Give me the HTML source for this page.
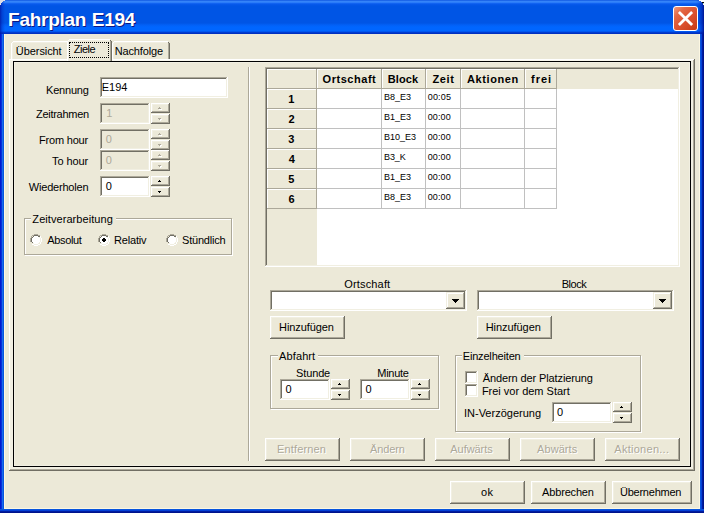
<!DOCTYPE html>
<html><head><meta charset="utf-8"><title>Fahrplan E194</title>
<style>
html,body{margin:0;padding:0;}
body{width:704px;height:513px;position:relative;overflow:hidden;background:#ECE9D8;font-family:"Liberation Sans",sans-serif;}
div,span{position:absolute;box-sizing:border-box;}
.t{font:11px/13px "Liberation Sans",sans-serif;color:#000;white-space:pre;}
.t.b{font-weight:bold;}
.t.s9{font-size:9px;line-height:11px;}
.t.s19{font-size:19px;line-height:22px;}
.t.ttl{color:#fff;text-shadow:1px 1px 0 #0A1883;}
.t.dis{color:#ACA899;text-shadow:1px 1px 0 #fff;}
.t.disf{color:#ACA899;}
.t.gt{background:#ECE9D8;box-shadow:-1px 0 0 #ECE9D8,3px 0 0 #ECE9D8;}
/* frame */
#tb{left:0;top:0;width:704px;height:34px;background:linear-gradient(180deg,#0A50DC 0px,#2E7CF6 1px,#3C8CFB 2px,#1A6CF6 3px,#085AEC 4px,#0055E5 6px,#0055E5 23px,#0260F6 25px,#0066FF 27px,#0066FF 31px,#0048E0 32px,#0030C0 33px,#0030C0 34px);}
#bl{left:0;top:34px;width:4px;height:479px;background:linear-gradient(90deg,#0019CF 0,#0019CF 1px,#0831D9 1px,#0831D9 2px,#166AEE 2px,#166AEE 3px,#0855DD 3px);}
#br{left:700px;top:34px;width:4px;height:479px;background:linear-gradient(90deg,#0855DD 0,#0855DD 1px,#0441D8 1px,#0441D8 2px,#001DA0 2px,#001DA0 3px,#00138C 3px);}
#bb{left:0;top:509px;width:704px;height:4px;background:linear-gradient(180deg,#0855DD 0,#0855DD 1px,#0441D8 1px,#0441D8 2px,#001DA0 2px,#001DA0 3px,#00138C 3px);}
#cream{left:4px;top:34px;width:696px;height:475px;border:1px solid #FCF7E2;border-top:none;}
.cnr{width:4px;height:4px;top:0;background:#fff;}
/* close */
#cl{left:673px;top:6px;width:25px;height:25px;border:1px solid #fff;border-radius:3px;background:linear-gradient(135deg,#EE9A7C 0%,#E36844 25%,#DC5230 55%,#C63A14 100%);}
/* 3d */
.btn{background:#ECE9D8;box-shadow:inset -1px -1px 0 #716F64,inset 1px 1px 0 #fff,inset -2px -2px 0 #ACA899,inset 2px 2px 0 #F1EFE2;}
.sbtn{background:#ECE9D8;box-shadow:inset -1px -1px 0 #716F64,inset 1px 1px 0 #F1EFE2,inset -2px -2px 0 #ACA899,inset 2px 2px 0 #fff;}
.sunk{background:#fff;box-shadow:inset -1px -1px 0 #fff,inset 1px 1px 0 #ACA899,inset -2px -2px 0 #F1EFE2,inset 2px 2px 0 #716F64;}
.sunk.d{background:#ECE9D8;}
.grp{border:1px solid #ACA899;box-shadow:1px 1px 0 #fff,inset 1px 1px 0 #fff;}
.k{background:#000;}
.w{background:#fff;}
.l{background:#F1EFE2;}
.g{background:#ACA899;}
.dk{background:#716F64;}
.f{background:#ECE9D8;}
.gl{background:#C0C0C0;}

</style></head>
<body>
<div id="tb"></div><div id="bl"></div><div id="br"></div><div id="bb"></div><div id="cream"></div>
<div style="left:0;top:0;width:6px;height:34px;background:linear-gradient(90deg,rgba(0,20,160,.75) 0,rgba(0,30,180,.35) 2px,rgba(0,40,200,0) 5px)"></div>
<div style="left:696px;top:0;width:8px;height:34px;background:linear-gradient(270deg,rgba(0,10,130,.85) 0,rgba(0,20,160,.55) 2px,rgba(0,40,200,.2) 5px,rgba(0,40,200,0) 8px)"></div>
<svg style="position:absolute;left:0;top:0" width="704" height="8" viewBox="0 0 704 8" shape-rendering="crispEdges"><path d="M0 0h5v1h-2v1h-1v1h-1v2h-1z" fill="#DCDEE6"/><path d="M699 0h5v2h-3v-1h-2z" fill="#fff"/><rect x="702" y="2" width="2" height="1" fill="#000"/><rect x="703" y="3" width="1" height="1" fill="#C4E4C4"/><rect x="703" y="4" width="1" height="1" fill="#F4F8F4"/></svg>
<div id="cl"></div>
<svg style="position:absolute;left:673px;top:6px" width="25" height="25" viewBox="0 0 25 25"><path d="M5.9 5.9 L19.1 19.1 M19.1 5.9 L5.9 19.1" stroke="#fff" stroke-width="2.8" stroke-linecap="butt" fill="none"/></svg>
<div class="l" style="left:10px;top:60px;width:683px;height:409px;"></div>
<div class="w" style="left:9px;top:59px;width:686px;height:1px;"></div>
<div class="" style="left:10px;top:60px;width:684px;height:1px;background:#F8F7EE;"></div>
<div class="w" style="left:9px;top:59px;width:1px;height:412px;"></div>
<div class="l" style="left:10px;top:60px;width:1px;height:410px;"></div>
<div class="dk" style="left:694px;top:59px;width:1px;height:412px;"></div>
<div class="g" style="left:693px;top:60px;width:1px;height:410px;"></div>
<div class="dk" style="left:9px;top:470px;width:686px;height:1px;"></div>
<div class="g" style="left:10px;top:469px;width:684px;height:1px;"></div>
<div class="f" style="left:13px;top:61px;width:678px;height:406px;border:1px solid #000;"></div>
<div class="l" style="left:689px;top:62px;width:1px;height:404px;"></div>
<div class="l" style="left:14px;top:465px;width:676px;height:1px;"></div>
<div class="l" style="left:14px;top:62px;width:1px;height:404px;"></div>
<div class="l" style="left:14px;top:62px;width:676px;height:1px;"></div>
<div class="f" style="left:11px;top:41px;width:58px;height:18px;"></div>
<div class="w" style="left:11px;top:43px;width:1px;height:16px;"></div>
<div class="w" style="left:13px;top:41px;width:54px;height:1px;"></div>
<div class="w" style="left:12px;top:42px;width:1px;height:1px;"></div>
<div class="l" style="left:12px;top:43px;width:1px;height:16px;"></div>
<div class="l" style="left:13px;top:42px;width:54px;height:1px;"></div>
<div class="dk" style="left:68px;top:43px;width:1px;height:16px;"></div>
<div class="g" style="left:67px;top:42px;width:1px;height:17px;"></div>
<div class="dk" style="left:67px;top:42px;width:1px;height:1px;"></div>
<div class="f" style="left:112px;top:41px;width:58px;height:18px;"></div>
<div class="w" style="left:112px;top:43px;width:1px;height:16px;"></div>
<div class="w" style="left:114px;top:41px;width:54px;height:1px;"></div>
<div class="w" style="left:113px;top:42px;width:1px;height:1px;"></div>
<div class="l" style="left:113px;top:43px;width:1px;height:16px;"></div>
<div class="l" style="left:114px;top:42px;width:54px;height:1px;"></div>
<div class="dk" style="left:169px;top:43px;width:1px;height:16px;"></div>
<div class="g" style="left:168px;top:42px;width:1px;height:17px;"></div>
<div class="dk" style="left:168px;top:42px;width:1px;height:1px;"></div>
<div class="f" style="left:67px;top:39px;width:45px;height:22px;"></div>
<div class="w" style="left:67px;top:41px;width:1px;height:20px;"></div>
<div class="w" style="left:69px;top:39px;width:41px;height:1px;"></div>
<div class="w" style="left:68px;top:40px;width:1px;height:1px;"></div>
<div class="l" style="left:68px;top:41px;width:1px;height:20px;"></div>
<div class="l" style="left:69px;top:40px;width:41px;height:1px;"></div>
<div class="dk" style="left:111px;top:41px;width:1px;height:20px;"></div>
<div class="g" style="left:110px;top:40px;width:1px;height:21px;"></div>
<div class="dk" style="left:110px;top:40px;width:1px;height:1px;"></div>
<div style="left:69px;top:42px;width:40px;height:16px;border:1px dotted #000;"></div>
<div class="sunk" style="left:100px;top:77px;width:128px;height:21px;"></div>
<div class="sunk d" style="left:100px;top:103px;width:50px;height:21px;"></div>
<div class="btn" style="left:151px;top:103px;width:19px;height:10px;"></div>
<div class="btn" style="left:151px;top:114px;width:19px;height:10px;"></div>
<div class="" style="left:160px;top:108px;width:1px;height:1px;background:#fff;"></div>
<div class="" style="left:159px;top:109px;width:3px;height:1px;background:#fff;"></div>
<div class="" style="left:159px;top:107px;width:1px;height:1px;background:#ACA899;"></div>
<div class="" style="left:158px;top:108px;width:3px;height:1px;background:#ACA899;"></div>
<div class="" style="left:159px;top:119px;width:3px;height:1px;background:#fff;"></div>
<div class="" style="left:160px;top:120px;width:1px;height:1px;background:#fff;"></div>
<div class="" style="left:158px;top:118px;width:3px;height:1px;background:#ACA899;"></div>
<div class="" style="left:159px;top:119px;width:1px;height:1px;background:#ACA899;"></div>
<div class="sunk d" style="left:100px;top:129px;width:50px;height:21px;"></div>
<div class="btn" style="left:151px;top:129px;width:19px;height:10px;"></div>
<div class="btn" style="left:151px;top:140px;width:19px;height:10px;"></div>
<div class="" style="left:160px;top:134px;width:1px;height:1px;background:#fff;"></div>
<div class="" style="left:159px;top:135px;width:3px;height:1px;background:#fff;"></div>
<div class="" style="left:159px;top:133px;width:1px;height:1px;background:#ACA899;"></div>
<div class="" style="left:158px;top:134px;width:3px;height:1px;background:#ACA899;"></div>
<div class="" style="left:159px;top:145px;width:3px;height:1px;background:#fff;"></div>
<div class="" style="left:160px;top:146px;width:1px;height:1px;background:#fff;"></div>
<div class="" style="left:158px;top:144px;width:3px;height:1px;background:#ACA899;"></div>
<div class="" style="left:159px;top:145px;width:1px;height:1px;background:#ACA899;"></div>
<div class="sunk d" style="left:100px;top:150px;width:50px;height:21px;"></div>
<div class="btn" style="left:151px;top:150px;width:19px;height:10px;"></div>
<div class="btn" style="left:151px;top:161px;width:19px;height:10px;"></div>
<div class="" style="left:160px;top:155px;width:1px;height:1px;background:#fff;"></div>
<div class="" style="left:159px;top:156px;width:3px;height:1px;background:#fff;"></div>
<div class="" style="left:159px;top:154px;width:1px;height:1px;background:#ACA899;"></div>
<div class="" style="left:158px;top:155px;width:3px;height:1px;background:#ACA899;"></div>
<div class="" style="left:159px;top:166px;width:3px;height:1px;background:#fff;"></div>
<div class="" style="left:160px;top:167px;width:1px;height:1px;background:#fff;"></div>
<div class="" style="left:158px;top:165px;width:3px;height:1px;background:#ACA899;"></div>
<div class="" style="left:159px;top:166px;width:1px;height:1px;background:#ACA899;"></div>
<div class="sunk" style="left:100px;top:176px;width:50px;height:21px;"></div>
<div class="btn" style="left:151px;top:176px;width:19px;height:10px;"></div>
<div class="btn" style="left:151px;top:187px;width:19px;height:10px;"></div>
<div class="" style="left:159px;top:180px;width:1px;height:1px;background:#000;"></div>
<div class="" style="left:158px;top:181px;width:3px;height:1px;background:#000;"></div>
<div class="" style="left:158px;top:191px;width:3px;height:1px;background:#000;"></div>
<div class="" style="left:159px;top:192px;width:1px;height:1px;background:#000;"></div>
<div class="" style="left:24px;top:218px;width:208px;height:37px;border:1px solid #ACA899;"></div>
<div class="" style="left:25px;top:219px;width:208px;height:37px;border:1px solid #fff;border-left:none;border-top:none;"></div>
<div class="w" style="left:25px;top:219px;width:206px;height:1px;"></div>
<div class="w" style="left:25px;top:219px;width:1px;height:35px;"></div>
<svg style="position:absolute;left:30px;top:234px" width="12" height="12" viewBox="0 0 12 12" shape-rendering="crispEdges"><path d="M4 0h4v1h2v1h-2v-1h-4v1h-2v2h-1v4h-1v-4h1v-2h1v-1h2z" fill="#ACA899"/><path d="M4 1h4v1h2v1h-2v-1h-4v1h-1v1h-1v4h1v1h-1v-1h-1v-4h1v-1h1v-1h1z" fill="#716F64"/><path d="M4 2h4v1h1v1h1v4h-1v1h-1v1h-4v-1h-1v-1h-1v-4h1v-1h1z" fill="#fff"/><path d="M10 2h1v2h1v4h-1v2h-1v1h-2v1h-4v-1h-2v-1h2v1h4v-1h2v-2h1v-4h-1z" fill="#fff"/><path d="M9 3h1v1h1v4h-1v1h-1v1h-1v1h-4v-1h-1v-1h1v1h4v-1h1v-1h1v-4h-1z" fill="#F1EFE2"/></svg>
<svg style="position:absolute;left:98px;top:234px" width="12" height="12" viewBox="0 0 12 12" shape-rendering="crispEdges"><path d="M4 0h4v1h2v1h-2v-1h-4v1h-2v2h-1v4h-1v-4h1v-2h1v-1h2z" fill="#ACA899"/><path d="M4 1h4v1h2v1h-2v-1h-4v1h-1v1h-1v4h1v1h-1v-1h-1v-4h1v-1h1v-1h1z" fill="#716F64"/><path d="M4 2h4v1h1v1h1v4h-1v1h-1v1h-4v-1h-1v-1h-1v-4h1v-1h1z" fill="#fff"/><path d="M10 2h1v2h1v4h-1v2h-1v1h-2v1h-4v-1h-2v-1h2v1h4v-1h2v-2h1v-4h-1z" fill="#fff"/><path d="M9 3h1v1h1v4h-1v1h-1v1h-1v1h-4v-1h-1v-1h1v1h4v-1h1v-1h1v-4h-1z" fill="#F1EFE2"/><path d="M5 4h2v1h1v2h-1v1h-2v-1h-1v-2h1z" fill="#000"/></svg>
<svg style="position:absolute;left:166px;top:234px" width="12" height="12" viewBox="0 0 12 12" shape-rendering="crispEdges"><path d="M4 0h4v1h2v1h-2v-1h-4v1h-2v2h-1v4h-1v-4h1v-2h1v-1h2z" fill="#ACA899"/><path d="M4 1h4v1h2v1h-2v-1h-4v1h-1v1h-1v4h1v1h-1v-1h-1v-4h1v-1h1v-1h1z" fill="#716F64"/><path d="M4 2h4v1h1v1h1v4h-1v1h-1v1h-4v-1h-1v-1h-1v-4h1v-1h1z" fill="#fff"/><path d="M10 2h1v2h1v4h-1v2h-1v1h-2v1h-4v-1h-2v-1h2v1h4v-1h2v-2h1v-4h-1z" fill="#fff"/><path d="M9 3h1v1h1v4h-1v1h-1v1h-1v1h-4v-1h-1v-1h1v1h4v-1h1v-1h1v-4h-1z" fill="#F1EFE2"/></svg>
<div class="g" style="left:248px;top:67px;width:1px;height:394px;"></div>
<div class="w" style="left:249px;top:67px;width:1px;height:394px;"></div>
<div class="sunk" style="left:265px;top:67px;width:415px;height:200px;"></div>
<div class="f" style="left:267px;top:69px;width:411px;height:20px;"></div>
<div class="f" style="left:267px;top:89px;width:50px;height:176px;"></div>
<div class="g" style="left:316px;top:69px;width:1px;height:20px;"></div>
<div class="g" style="left:267px;top:88px;width:50px;height:1px;"></div>
<div class="w" style="left:267px;top:69px;width:49px;height:1px;"></div>
<div class="w" style="left:267px;top:69px;width:1px;height:19px;"></div>
<div class="g" style="left:381px;top:69px;width:1px;height:20px;"></div>
<div class="g" style="left:317px;top:88px;width:65px;height:1px;"></div>
<div class="w" style="left:317px;top:69px;width:64px;height:1px;"></div>
<div class="w" style="left:317px;top:69px;width:1px;height:19px;"></div>
<div class="g" style="left:425px;top:69px;width:1px;height:20px;"></div>
<div class="g" style="left:382px;top:88px;width:44px;height:1px;"></div>
<div class="w" style="left:382px;top:69px;width:43px;height:1px;"></div>
<div class="w" style="left:382px;top:69px;width:1px;height:19px;"></div>
<div class="g" style="left:460px;top:69px;width:1px;height:20px;"></div>
<div class="g" style="left:426px;top:88px;width:35px;height:1px;"></div>
<div class="w" style="left:426px;top:69px;width:34px;height:1px;"></div>
<div class="w" style="left:426px;top:69px;width:1px;height:19px;"></div>
<div class="g" style="left:524px;top:69px;width:1px;height:20px;"></div>
<div class="g" style="left:461px;top:88px;width:64px;height:1px;"></div>
<div class="w" style="left:461px;top:69px;width:63px;height:1px;"></div>
<div class="w" style="left:461px;top:69px;width:1px;height:19px;"></div>
<div class="g" style="left:556px;top:69px;width:1px;height:20px;"></div>
<div class="g" style="left:525px;top:88px;width:32px;height:1px;"></div>
<div class="w" style="left:525px;top:69px;width:31px;height:1px;"></div>
<div class="w" style="left:525px;top:69px;width:1px;height:19px;"></div>
<div class="g" style="left:267px;top:108px;width:50px;height:1px;"></div>
<div class="g" style="left:316px;top:89px;width:1px;height:20px;"></div>
<div class="w" style="left:267px;top:89px;width:49px;height:1px;"></div>
<div class="w" style="left:267px;top:89px;width:1px;height:19px;"></div>
<div class="gl" style="left:317px;top:108px;width:240px;height:1px;"></div>
<div class="gl" style="left:381px;top:89px;width:1px;height:20px;"></div>
<div class="gl" style="left:425px;top:89px;width:1px;height:20px;"></div>
<div class="gl" style="left:460px;top:89px;width:1px;height:20px;"></div>
<div class="gl" style="left:524px;top:89px;width:1px;height:20px;"></div>
<div class="gl" style="left:556px;top:89px;width:1px;height:20px;"></div>
<div class="g" style="left:267px;top:128px;width:50px;height:1px;"></div>
<div class="g" style="left:316px;top:109px;width:1px;height:20px;"></div>
<div class="w" style="left:267px;top:109px;width:49px;height:1px;"></div>
<div class="w" style="left:267px;top:109px;width:1px;height:19px;"></div>
<div class="gl" style="left:317px;top:128px;width:240px;height:1px;"></div>
<div class="gl" style="left:381px;top:109px;width:1px;height:20px;"></div>
<div class="gl" style="left:425px;top:109px;width:1px;height:20px;"></div>
<div class="gl" style="left:460px;top:109px;width:1px;height:20px;"></div>
<div class="gl" style="left:524px;top:109px;width:1px;height:20px;"></div>
<div class="gl" style="left:556px;top:109px;width:1px;height:20px;"></div>
<div class="g" style="left:267px;top:148px;width:50px;height:1px;"></div>
<div class="g" style="left:316px;top:129px;width:1px;height:20px;"></div>
<div class="w" style="left:267px;top:129px;width:49px;height:1px;"></div>
<div class="w" style="left:267px;top:129px;width:1px;height:19px;"></div>
<div class="gl" style="left:317px;top:148px;width:240px;height:1px;"></div>
<div class="gl" style="left:381px;top:129px;width:1px;height:20px;"></div>
<div class="gl" style="left:425px;top:129px;width:1px;height:20px;"></div>
<div class="gl" style="left:460px;top:129px;width:1px;height:20px;"></div>
<div class="gl" style="left:524px;top:129px;width:1px;height:20px;"></div>
<div class="gl" style="left:556px;top:129px;width:1px;height:20px;"></div>
<div class="g" style="left:267px;top:168px;width:50px;height:1px;"></div>
<div class="g" style="left:316px;top:149px;width:1px;height:20px;"></div>
<div class="w" style="left:267px;top:149px;width:49px;height:1px;"></div>
<div class="w" style="left:267px;top:149px;width:1px;height:19px;"></div>
<div class="gl" style="left:317px;top:168px;width:240px;height:1px;"></div>
<div class="gl" style="left:381px;top:149px;width:1px;height:20px;"></div>
<div class="gl" style="left:425px;top:149px;width:1px;height:20px;"></div>
<div class="gl" style="left:460px;top:149px;width:1px;height:20px;"></div>
<div class="gl" style="left:524px;top:149px;width:1px;height:20px;"></div>
<div class="gl" style="left:556px;top:149px;width:1px;height:20px;"></div>
<div class="g" style="left:267px;top:188px;width:50px;height:1px;"></div>
<div class="g" style="left:316px;top:169px;width:1px;height:20px;"></div>
<div class="w" style="left:267px;top:169px;width:49px;height:1px;"></div>
<div class="w" style="left:267px;top:169px;width:1px;height:19px;"></div>
<div class="gl" style="left:317px;top:188px;width:240px;height:1px;"></div>
<div class="gl" style="left:381px;top:169px;width:1px;height:20px;"></div>
<div class="gl" style="left:425px;top:169px;width:1px;height:20px;"></div>
<div class="gl" style="left:460px;top:169px;width:1px;height:20px;"></div>
<div class="gl" style="left:524px;top:169px;width:1px;height:20px;"></div>
<div class="gl" style="left:556px;top:169px;width:1px;height:20px;"></div>
<div class="g" style="left:267px;top:208px;width:50px;height:1px;"></div>
<div class="g" style="left:316px;top:189px;width:1px;height:20px;"></div>
<div class="w" style="left:267px;top:189px;width:49px;height:1px;"></div>
<div class="w" style="left:267px;top:189px;width:1px;height:19px;"></div>
<div class="gl" style="left:317px;top:208px;width:240px;height:1px;"></div>
<div class="gl" style="left:381px;top:189px;width:1px;height:20px;"></div>
<div class="gl" style="left:425px;top:189px;width:1px;height:20px;"></div>
<div class="gl" style="left:460px;top:189px;width:1px;height:20px;"></div>
<div class="gl" style="left:524px;top:189px;width:1px;height:20px;"></div>
<div class="gl" style="left:556px;top:189px;width:1px;height:20px;"></div>
<div class="sunk" style="left:270px;top:290px;width:197px;height:21px;"></div>
<div class="sbtn" style="left:446px;top:292px;width:19px;height:17px;"></div>
<div class="k" style="left:452px;top:299px;width:7px;height:1px;"></div>
<div class="k" style="left:453px;top:300px;width:5px;height:1px;"></div>
<div class="k" style="left:454px;top:301px;width:3px;height:1px;"></div>
<div class="k" style="left:455px;top:302px;width:1px;height:1px;"></div>
<div class="sunk" style="left:477px;top:290px;width:197px;height:21px;"></div>
<div class="sbtn" style="left:653px;top:292px;width:19px;height:17px;"></div>
<div class="k" style="left:659px;top:299px;width:7px;height:1px;"></div>
<div class="k" style="left:660px;top:300px;width:5px;height:1px;"></div>
<div class="k" style="left:661px;top:301px;width:3px;height:1px;"></div>
<div class="k" style="left:662px;top:302px;width:1px;height:1px;"></div>
<div class="btn" style="left:270px;top:316px;width:75px;height:23px;"></div>
<div class="btn" style="left:477px;top:316px;width:75px;height:23px;"></div>
<div class="" style="left:270px;top:355px;width:169px;height:54px;border:1px solid #ACA899;"></div>
<div class="" style="left:271px;top:356px;width:169px;height:54px;border:1px solid #fff;border-left:none;border-top:none;"></div>
<div class="w" style="left:271px;top:356px;width:167px;height:1px;"></div>
<div class="w" style="left:271px;top:356px;width:1px;height:52px;"></div>
<div class="sunk" style="left:280px;top:379px;width:50px;height:21px;"></div>
<div class="btn" style="left:331px;top:379px;width:19px;height:10px;"></div>
<div class="btn" style="left:331px;top:390px;width:19px;height:10px;"></div>
<div class="" style="left:339px;top:383px;width:1px;height:1px;background:#000;"></div>
<div class="" style="left:338px;top:384px;width:3px;height:1px;background:#000;"></div>
<div class="" style="left:338px;top:394px;width:3px;height:1px;background:#000;"></div>
<div class="" style="left:339px;top:395px;width:1px;height:1px;background:#000;"></div>
<div class="sunk" style="left:360px;top:379px;width:50px;height:21px;"></div>
<div class="btn" style="left:411px;top:379px;width:19px;height:10px;"></div>
<div class="btn" style="left:411px;top:390px;width:19px;height:10px;"></div>
<div class="" style="left:419px;top:383px;width:1px;height:1px;background:#000;"></div>
<div class="" style="left:418px;top:384px;width:3px;height:1px;background:#000;"></div>
<div class="" style="left:418px;top:394px;width:3px;height:1px;background:#000;"></div>
<div class="" style="left:419px;top:395px;width:1px;height:1px;background:#000;"></div>
<div class="" style="left:455px;top:355px;width:186px;height:77px;border:1px solid #ACA899;"></div>
<div class="" style="left:456px;top:356px;width:186px;height:77px;border:1px solid #fff;border-left:none;border-top:none;"></div>
<div class="w" style="left:456px;top:356px;width:184px;height:1px;"></div>
<div class="w" style="left:456px;top:356px;width:1px;height:75px;"></div>
<div class="sunk" style="left:465px;top:371px;width:13px;height:13px;"></div>
<div class="sunk" style="left:465px;top:384px;width:13px;height:13px;"></div>
<div class="sunk" style="left:552px;top:402px;width:60px;height:21px;"></div>
<div class="btn" style="left:613px;top:402px;width:19px;height:10px;"></div>
<div class="btn" style="left:613px;top:413px;width:19px;height:10px;"></div>
<div class="" style="left:621px;top:406px;width:1px;height:1px;background:#000;"></div>
<div class="" style="left:620px;top:407px;width:3px;height:1px;background:#000;"></div>
<div class="" style="left:620px;top:417px;width:3px;height:1px;background:#000;"></div>
<div class="" style="left:621px;top:418px;width:1px;height:1px;background:#000;"></div>
<div class="btn" style="left:265px;top:438px;width:75px;height:23px;"></div>
<div class="btn" style="left:350px;top:438px;width:75px;height:23px;"></div>
<div class="btn" style="left:435px;top:438px;width:75px;height:23px;"></div>
<div class="btn" style="left:520px;top:438px;width:75px;height:23px;"></div>
<div class="btn" style="left:605px;top:438px;width:75px;height:23px;"></div>
<div class="btn" style="left:450px;top:481px;width:75px;height:23px;"></div>
<div class="btn" style="left:531px;top:481px;width:75px;height:23px;"></div>
<div class="btn" style="left:612px;top:481px;width:80px;height:23px;"></div>
<span class="t s19 b ttl" style="left:8.11px;top:9px;letter-spacing:-0.271px;">Fahrplan</span>
<span class="t s19 b ttl" style="left:91.86px;top:9px;letter-spacing:-0.287px;">E194</span>
<span class="t" style="left:15.87px;top:45px;letter-spacing:-0.081px;">Übersicht</span>
<span class="t" style="left:73.79px;top:43px;letter-spacing:-0.517px;">Ziele</span>
<span class="t" style="left:114.64px;top:45px;letter-spacing:-0.124px;">Nachfolge</span>
<span class="t" style="left:46.10px;top:84px;letter-spacing:-0.222px;">Kennung</span>
<span class="t" style="left:36.04px;top:108px;letter-spacing:-0.287px;">Zeitrahmen</span>
<span class="t" style="left:39.02px;top:134px;letter-spacing:-0.198px;">From hour</span>
<span class="t" style="left:52.04px;top:155px;letter-spacing:-0.101px;">To hour</span>
<span class="t" style="left:28.82px;top:181px;letter-spacing:-0.204px;">Wiederholen</span>
<span class="t" style="left:101.64px;top:81px;letter-spacing:0.027px;">E194</span>
<span class="t disf" style="left:106.24px;top:107px;">1</span>
<span class="t disf" style="left:105.69px;top:133px;">0</span>
<span class="t disf" style="left:105.69px;top:154px;">0</span>
<span class="t" style="left:105.69px;top:180px;">0</span>
<span class="t gt" style="left:32.35px;top:213px;letter-spacing:0.067px;">Zeitverarbeitung</span>
<span class="t" style="left:47.17px;top:234px;letter-spacing:-0.326px;">Absolut</span>
<span class="t" style="left:114.10px;top:234px;letter-spacing:-0.196px;">Relativ</span>
<span class="t" style="left:182.05px;top:234px;letter-spacing:-0.203px;">Stündlich</span>
<span class="t b" style="left:322.62px;top:73px;letter-spacing:0.529px;">Ortschaft</span>
<span class="t b" style="left:387.75px;top:73px;letter-spacing:0.119px;">Block</span>
<span class="t b" style="left:432.44px;top:73px;letter-spacing:0.612px;">Zeit</span>
<span class="t b" style="left:467.02px;top:73px;letter-spacing:0.605px;">Aktionen</span>
<span class="t b" style="left:531.12px;top:73px;letter-spacing:0.931px;">frei</span>
<span class="t b" style="left:288.16px;top:93px;">1</span>
<span class="t b" style="left:288.55px;top:113px;">2</span>
<span class="t b" style="left:288.26px;top:133px;">3</span>
<span class="t b" style="left:288.76px;top:153px;">4</span>
<span class="t b" style="left:288.29px;top:173px;">5</span>
<span class="t b" style="left:288.49px;top:193px;">6</span>
<span class="t s9" style="left:384.05px;top:92px;letter-spacing:-0.022px;">B8_E3</span>
<span class="t s9" style="left:427.77px;top:92px;letter-spacing:0.163px;">00:05</span>
<span class="t s9" style="left:384.05px;top:112px;letter-spacing:-0.022px;">B1_E3</span>
<span class="t s9" style="left:427.77px;top:112px;letter-spacing:0.092px;">00:00</span>
<span class="t s9" style="left:384.05px;top:132px;letter-spacing:-0.018px;">B10_E3</span>
<span class="t s9" style="left:427.77px;top:132px;letter-spacing:0.092px;">00:00</span>
<span class="t s9" style="left:384.05px;top:152px;letter-spacing:-0.141px;">B3_K</span>
<span class="t s9" style="left:427.77px;top:152px;letter-spacing:0.092px;">00:00</span>
<span class="t s9" style="left:384.05px;top:172px;letter-spacing:-0.022px;">B1_E3</span>
<span class="t s9" style="left:427.77px;top:172px;letter-spacing:0.092px;">00:00</span>
<span class="t s9" style="left:384.05px;top:192px;letter-spacing:-0.022px;">B8_E3</span>
<span class="t s9" style="left:427.77px;top:192px;letter-spacing:0.092px;">00:00</span>
<span class="t" style="left:344.37px;top:278px;letter-spacing:0.144px;">Ortschaft</span>
<span class="t" style="left:561.64px;top:278px;letter-spacing:-0.460px;">Block</span>
<span class="t" style="left:279.02px;top:321px;letter-spacing:-0.075px;">Hinzufügen</span>
<span class="t" style="left:485.64px;top:321px;letter-spacing:-0.046px;">Hinzufügen</span>
<span class="t gt" style="left:279.12px;top:350px;letter-spacing:0.097px;">Abfahrt</span>
<span class="t" style="left:296.05px;top:367px;letter-spacing:-0.135px;">Stunde</span>
<span class="t" style="left:377.29px;top:367px;letter-spacing:-0.279px;">Minute</span>
<span class="t" style="left:285.54px;top:383px;">0</span>
<span class="t" style="left:365.39px;top:383px;">0</span>
<span class="t gt" style="left:462.77px;top:350px;letter-spacing:-0.182px;">Einzelheiten</span>
<span class="t" style="left:482.73px;top:372px;letter-spacing:-0.110px;">Ändern der Platzierung</span>
<span class="t" style="left:481.91px;top:385px;letter-spacing:-0.011px;">Frei vor dem Start</span>
<span class="t" style="left:463.98px;top:407px;">IN-Verzögerung</span>
<span class="t" style="left:556.89px;top:406px;">0</span>
<span class="t dis" style="left:277.10px;top:443px;letter-spacing:0.123px;">Entfernen</span>
<span class="t dis" style="left:370.12px;top:443px;letter-spacing:-0.158px;">Ändern</span>
<span class="t dis" style="left:450.32px;top:443px;letter-spacing:-0.061px;">Aufwärts</span>
<span class="t dis" style="left:537.12px;top:443px;letter-spacing:0.058px;">Abwärts</span>
<span class="t dis" style="left:614.27px;top:443px;letter-spacing:0.277px;">Aktionen...</span>
<span class="t" style="left:481.06px;top:486px;letter-spacing:0.345px;">ok</span>
<span class="t" style="left:542.12px;top:486px;letter-spacing:-0.177px;">Abbrechen</span>
<span class="t" style="left:620.00px;top:486px;letter-spacing:-0.242px;">Übernehmen</span>
</body></html>
